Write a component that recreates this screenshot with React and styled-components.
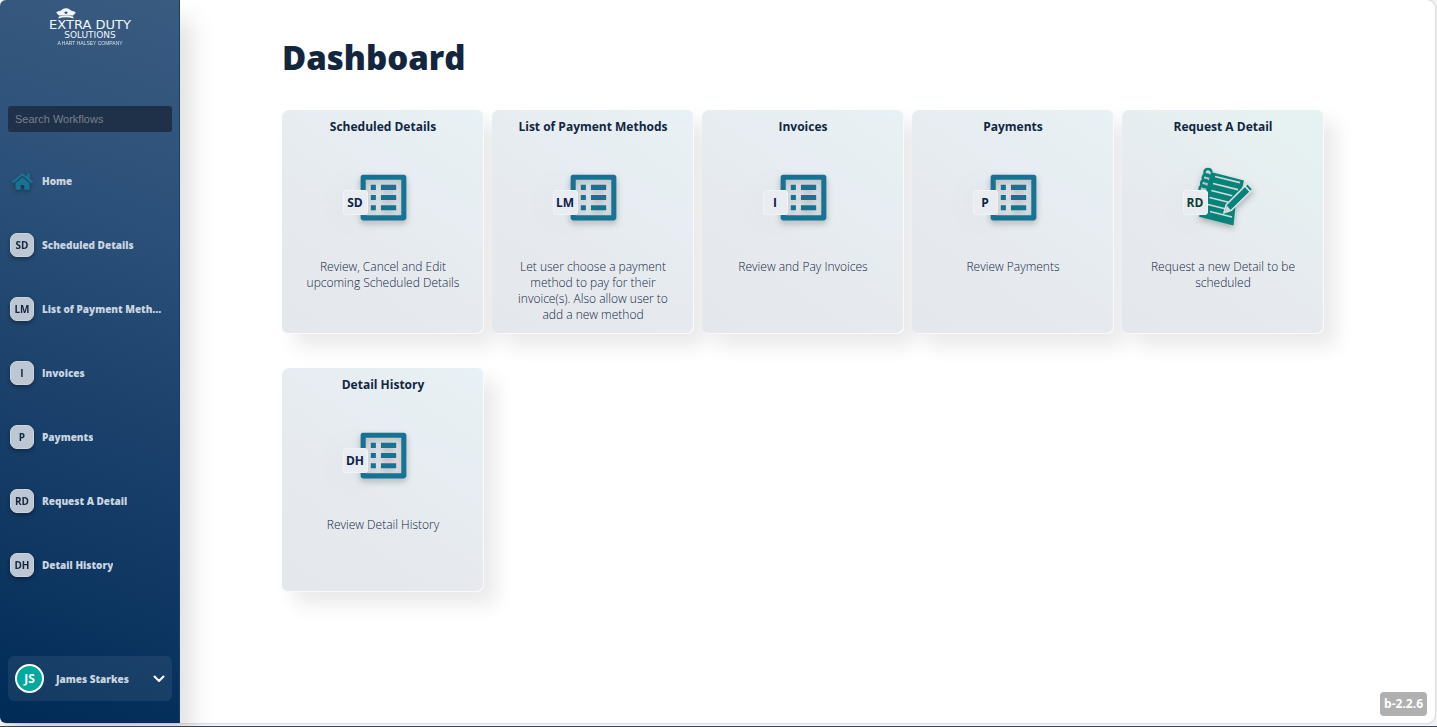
import React from "react";
import styled, { createGlobalStyle } from "styled-components";
import { FaHome } from "react-icons/fa";
import { MdListAlt } from "react-icons/md";

const GlobalStyle = createGlobalStyle`
  *, *::before, *::after { box-sizing: border-box; }
  body {
    margin: 0;
    background: #f4f4f5;
    color: #12263f;
    font-family: "Open Sans", "Noto Sans", sans-serif;
  }
`;

const Page = styled.div`
  display: flex;
  flex-direction: column;
  min-height: 100vh;
  padding-right: 2px;
  border-bottom: 1px solid #3d4a5c;
`;

const Shell = styled.div`
  position: relative;
  display: flex;
  flex: 1;
  margin-bottom: 3px;
  background: #fff;
  border-radius: 8px;
  box-shadow: 0 0 2px rgba(0, 0, 0, 0.35);
`;

const Sidebar = styled.aside`
  display: flex;
  flex-direction: column;
  flex: 0 0 180px;
  padding: 8px 7px 22px 8px;
  border-right: 1px solid #1b3c63;
  border-radius: 6px 0 0 6px;
  background: linear-gradient(20deg, #002b57 0%, #1c426c 45%, #2b5079 70%, #3a5b80 100%);
  box-shadow: 12px 20px 24px rgba(0, 0, 0, 0.12);
`;

const Logo = styled.a`
  display: flex;
  flex-direction: column;
  align-items: center;
  height: 98px;
  color: #f3f6fa;
  text-decoration: none;
  white-space: nowrap;

  svg { margin-right: 48px; }
`;

const LogoName = styled.span`
  font: 13px/12px "DejaVu Sans", sans-serif;
`;

const LogoSub = styled.span`
  font: 9px/9px "DejaVu Sans", sans-serif;
`;

const LogoTag = styled.span`
  font: 5px/6px "Liberation Sans", sans-serif;
  opacity: 0.85;
`;

const Search = styled.input`
  width: 100%;
  height: 26px;
  padding: 0 7px;
  border: 0;
  border-radius: 3px;
  background: #1f3149;
  color: #dfe5ec;
  font: 11px "Liberation Sans", sans-serif;

  &::placeholder { color: #76808c; opacity: 1; }
`;

const Nav = styled.nav`
  display: flex;
  flex-direction: column;
  gap: 40px;
  margin: 37px 0 32px;
`;

const NavLink = styled.a`
  display: flex;
  align-items: center;
  gap: 8px;
  height: 24px;
  padding: 0 2px;
  color: #cbd5e1;
  font-size: 10px;
  font-weight: 800;
  line-height: 16px;
  text-decoration: none;
`;

const NavText = styled.span`
  max-width: 120px;
  overflow: hidden;
  text-overflow: ellipsis;
  white-space: nowrap;
`;

const NavIcon = styled.span`
  display: flex;
  align-items: center;
  justify-content: center;
  flex: 0 0 24px;
  height: 24px;
  color: #167394;
  filter: drop-shadow(0 2px 2px rgba(0, 0, 0, 0.35));
`;

const Initials = styled(NavIcon)`
  border: 1px solid #ccd4df;
  border-radius: 7px;
  background: #bdc7d4;
  color: #12263f;
  font-size: 10px;
  font-weight: 700;
`;

const UserButton = styled.button`
  display: flex;
  align-items: center;
  height: 45px;
  margin-top: auto;
  padding: 0 7px;
  border: 0;
  border-radius: 6px;
  background: rgba(255, 255, 255, 0.07);
  color: #cbd5e1;
  font: 800 10px/16px "Open Sans", sans-serif;
  text-align: left;
`;

const Avatar = styled.span`
  display: flex;
  align-items: center;
  justify-content: center;
  width: 29px;
  height: 29px;
  margin-right: 12px;
  border: 2px solid #fff;
  border-radius: 50%;
  background: #00a99d;
  color: #fff;
  font-size: 12px;
  font-weight: 700;
`;

const UserName = styled.span`
  flex: 1;
`;

const Main = styled.main`
  flex: 1;
  min-width: 0;
  padding: 34px 111px 40px 102px;
`;

const Heading = styled.h1`
  margin: 0 0 28px;
  font-size: 33px;
  font-weight: 800;
  line-height: 48px;
`;

const Grid = styled.div`
  display: grid;
  grid-template-columns: repeat(auto-fill, minmax(192px, 1fr));
  gap: 34px 8px;
`;

const Card = styled.a`
  display: flex;
  flex-direction: column;
  align-items: center;
  min-height: 224px;
  padding: 9px 20px 8px;
  border-radius: 7px;
  background: linear-gradient(35deg, #e4e7ec 0%, #e6eaef 40%, ${(p) => (p.$green ? "#e6f3f2" : "#e8f1f5")} 100%);
  box-shadow: inset -1px -1px 0 #f8fafb, 12px 12px 20px rgba(0, 0, 0, 0.09);
  color: #12263f;
  text-align: center;
  text-decoration: none;
`;

const CardTitle = styled.h2`
  margin: 0;
  font-size: 12px;
  font-weight: 700;
  line-height: 16px;
  white-space: nowrap;
`;

const CardIcon = styled.div`
  position: relative;
  height: 61px;
  margin: 32px 0 31px;
  color: ${(p) => (p.$green ? "#06847a" : "#167394")};

  svg { display: block; filter: drop-shadow(0 3px 3px rgba(0, 0, 0, 0.25)); }
`;

const CardBadge = styled.span`
  position: absolute;
  top: 23px;
  left: -10px;
  display: flex;
  align-items: center;
  justify-content: center;
  width: 25px;
  height: 25px;
  border: 1px solid #f1f3f6;
  border-radius: 3px;
  background: #e9edf2;
  box-shadow: 0 0 40px rgba(0, 0, 0, 0.06);
  color: ${(p) => (p.$green ? "#0b3b33" : "#0c2348")};
  font-size: 12px;
  font-weight: 700;
`;

const CardText = styled.p`
  margin: 0;
  color: #12263f;
  font-size: 12px;
  font-weight: 300;
  line-height: 16px;
`;

const Version = styled.div`
  position: absolute;
  right: 8px;
  bottom: 7px;
  padding: 0 4px;
  border-radius: 4px;
  background: #b0b0b0;
  color: #fff;
  font-size: 12px;
  font-weight: 700;
  line-height: 24px;
`;

const CapMark = () => (
  <svg width="20" height="11" viewBox="0 0 20 11" aria-hidden="true">
    <path d="M.5 5C0 3.200 3 3.400 5 2.400 6.500 1.600 7 .3 10 .3s3.500 1.300 5 2.100c2 1 5 .8 4.500 2.600L17 7.600H3z" fill="#f3f6fa" />
    <path d="M3 8.400Q10 6.600 17 8.400L17.800 10.600Q10 7.800 2.200 10.600z" fill="#f3f6fa" />
    <path d="M10 2.700l.6 1.200 1.400.1-1 .9.300 1.400-1.300-.7-1.300.7.300-1.400-1-.9 1.400-.1z" fill="#2f527a" />
  </svg>
);

const NotebookPencil = () => (
  <svg width="61" height="61" viewBox="0 0 61 61" aria-hidden="true">
    <path d="M18 5l33 8.500-2.500 10L43 34.500 40.500 58.500 6 49.800z" fill="currentColor" />
    <g stroke="#d3dadb" strokeWidth="1.700">
      <path d="M22 9.500l25 6.200M20 16.500l25 6.200M18.300 23.500l21 5.300M16.500 30.500l19 4.800M15 37.500l17 4.300M17 44.500l22 5.500" />
    </g>
    <g fill="none" stroke="currentColor" strokeWidth="2.400">
      <path d="M18.500 5c-.5-4-6.500-4-7 0s3 5 5.500 2.600M16.800 10.500c-.5-4-6.500-4-7 0s3 5 5.500 2.600M15.200 16c-.5-4-6.500-4-7 0s3 5 5.500 2.600M13.600 21.500c-.5-4-6.500-4-7 0s3 5 5.500 2.600" />
    </g>
    <path d="M54.500 16.500l5.300 5.700-21.500 21-7.300 2.600 2.200-8z" fill="currentColor" stroke="#dde3e5" strokeWidth="1.600" />
    <path d="M33.800 38.600l3.700 4.300-5.200 2z" fill="#d9dfe1" />
    <path d="M51.500 18.500l5.500 6" stroke="#e7edef" strokeWidth="1.500" />
  </svg>
);

const ChevronDown = () => (
  <svg width="12" height="8" viewBox="0 0 12 8" aria-hidden="true">
    <path d="M1.500 1.500L6 6l4.500-4.500" fill="none" stroke="#fff" strokeWidth="2" strokeLinecap="round" strokeLinejoin="round" />
  </svg>
);

const workflows = [
  { code: "SD", name: "Scheduled Details", text: "Review, Cancel and Edit upcoming Scheduled Details" },
  { code: "LM", name: "List of Payment Methods", text: "Let user choose a payment method to pay for their invoice(s). Also allow user to add a new method" },
  { code: "I", name: "Invoices", text: "Review and Pay Invoices" },
  { code: "P", name: "Payments", text: "Review Payments" },
  { code: "RD", name: "Request A Detail", text: "Request a new Detail to be scheduled", green: true },
  { code: "DH", name: "Detail History", text: "Review Detail History" },
];

export default function App() {
  return (
    <Page>
      <GlobalStyle />
      <Shell>
        <Sidebar>
          <Logo href="#home">
            <CapMark />
            <LogoName>EXTRA DUTY</LogoName>
            <LogoSub>SOLUTIONS</LogoSub>
            <LogoTag>A HART HALSEY COMPANY</LogoTag>
          </Logo>
          <Search type="search" placeholder="Search Workflows" aria-label="Search Workflows" />
          <Nav>
            <NavLink href="#home">
              <NavIcon><FaHome size={21} /></NavIcon>
              <NavText>Home</NavText>
            </NavLink>
            {workflows.map((w) => (
              <NavLink key={w.code} href={`#${w.code}`}>
                <Initials>{w.code}</Initials>
                <NavText>{w.name}</NavText>
              </NavLink>
            ))}
          </Nav>
          <UserButton type="button">
            <Avatar>JS</Avatar>
            <UserName>James Starkes</UserName>
            <ChevronDown />
          </UserButton>
        </Sidebar>
        <Main>
          <Heading>Dashboard</Heading>
          <Grid>
            {workflows.map((w) => (
              <Card key={w.code} href={`#${w.code}`} $green={w.green}>
                <CardTitle>{w.name}</CardTitle>
                <CardIcon $green={w.green}>
                  {w.green ? <NotebookPencil /> : <MdListAlt size={61} />}
                  <CardBadge $green={w.green}>{w.code}</CardBadge>
                </CardIcon>
                <CardText>{w.text}</CardText>
              </Card>
            ))}
          </Grid>
        </Main>
        <Version>b-2.2.6</Version>
      </Shell>
    </Page>
  );
}
